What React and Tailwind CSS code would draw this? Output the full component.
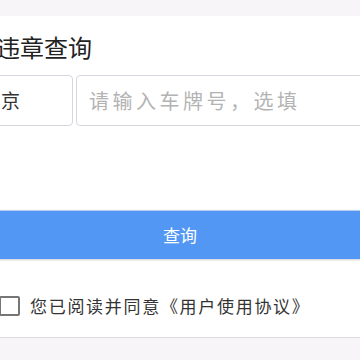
import React, { useState } from 'react';

const cjk = { fontFamily: '"Noto Sans CJK SC", "Liberation Sans", sans-serif' };

export default function App() {
  const [agreed, setAgreed] = useState(false);

  return (
    <div className="w-[360px] h-[360px] overflow-hidden bg-[#f7f5f7]" style={cjk}>
      <div className="h-[16px]" />
      <div className="bg-white border-b border-[#dcdcdc] -ml-[28px] w-[416px]">
        <h1 className="pl-[24px] pt-[17px] text-[24px] leading-[28px] text-[#222] font-normal">违章查询</h1>

        <div className="flex gap-[3px] mt-[14px]">
          <div className="w-[101px] h-[51px] shrink-0 border border-[#d6d6de] rounded-[4px] flex items-center pl-[8px] text-[19px] tracking-[1px] text-[#333]">
            北京
          </div>
          <input
            className="w-[300px] h-[51px] border border-[#d6d6de] rounded-[4px] px-[12px] text-[20px] tracking-[3.5px] text-[#333] placeholder:text-[#b3b3b3] outline-none"
            placeholder="请输入车牌号，选填"
          />
        </div>

        <div className="mt-[84px]">
          <button className="w-full h-[49px] bg-[#5297f3] border-t border-[#b9cdee] shadow-[0_1px_2px_rgba(0,0,0,0.2)] text-white text-[17px]">
            查询
          </button>
        </div>

        <label className="flex items-center h-[78px] pt-[16px] pl-[27px] gap-[10px] cursor-pointer">
          <span
            onClick={() => setAgreed(!agreed)}
            className="w-[21px] h-[20px] border-2 border-[#767676] rounded-[2px] bg-white shrink-0"
          />
          <span className="text-[17px] tracking-[1.7px] text-[#333]">您已阅读并同意《用户使用协议》</span>
        </label>
      </div>
    </div>
  );
}
